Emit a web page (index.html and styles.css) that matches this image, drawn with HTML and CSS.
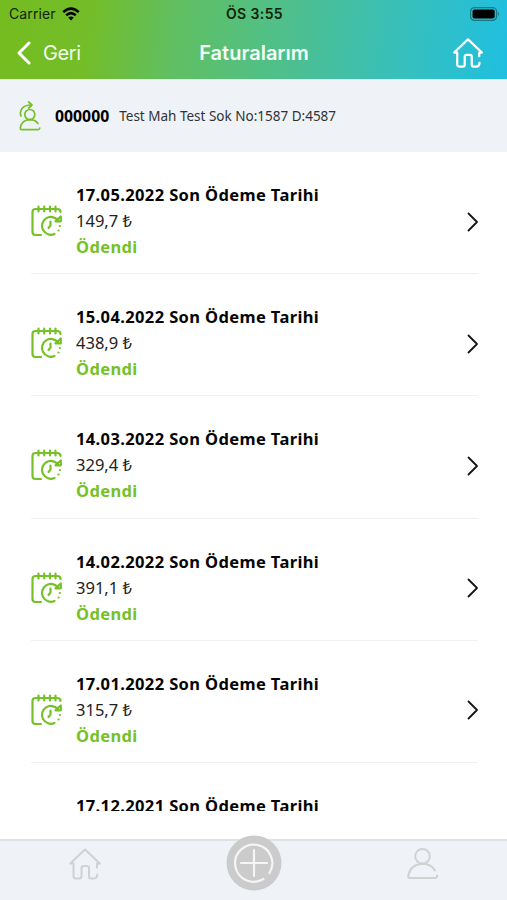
FILE: index.html
```html
<!DOCTYPE html>
<html lang="tr">
<head>
<meta charset="utf-8">
<title>Faturalarım</title>
<link rel="stylesheet" href="styles.css">
</head>
<body>
<svg class="defs" aria-hidden="true">
  <symbol id="home" viewBox="0 0 32 32">
    <path d="M4.500 15.500H1.200L16 1.500 30.800 15.500H28V19.500M4.500 15.500V28Q4.500 30.500 7 30.500H10.500Q12.500 30.500 12.500 28.500V20Q12.500 18 14.500 18H18Q20 18 20 20V28.500Q20 30.500 22 30.500H25Q28 30.500 28.300 26.500"/>
  </symbol>
  <symbol id="invoice" viewBox="0 0 32 32">
    <path d="M10 30H4.500Q1.500 30 1.500 27V7Q1.500 4 4.500 4H26Q29.500 4 29.500 7M7.500 1.500V6.500M13.200 1.500V6.500M19 1.500V6.500M24.500 1.500V6.500"/>
    <path d="M23.500 29A8.900 8.900 0 1 1 27 15.500M29.800 11.500V16.300H24.500ZM19.500 16.500V20.500L17.500 23"/>
    <path class="dots" d="M28.800 21h.1M27.500 25.500h.1"/>
  </symbol>
  <symbol id="next" viewBox="0 0 12 20"><path d="M1.500 1.500 10 10 1.500 18.500"/></symbol>
</svg>
<header class="header">
  <div class="status">
    <div class="carrier"><span>Carrier</span>
      <svg class="wifi" viewBox="0 0 18 14"><path d="M1.200 5.200Q9-2 16.800 5.200M4.200 8.300Q9 4 13.800 8.300"/><path class="solid" d="M6.200 10.600Q9 8.300 11.800 10.600L9 13.600Z"/></svg>
    </div>
    <div class="time">ÖS 3:55</div>
    <svg class="battery" viewBox="0 0 30 14"><rect class="shell" x=".6" y=".6" width="26" height="12.800" rx="4"/><rect x="2.500" y="2.500" width="22.200" height="9" rx="2"/><path class="tip" d="M28 5Q30 7 28 9Z"/></svg>
  </div>
  <nav class="navbar">
    <div class="back"><svg viewBox="0 0 14 24"><path d="M12 2 2 12 12 22"/></svg><span>Geri</span></div>
    <h1>Faturalarım</h1>
    <svg class="home"><use href="#home"/></svg>
  </nav>
</header>
<section class="account">
  <svg viewBox="0 0 22 30"><circle cx="10.800" cy="13.500" r="5"/><path d="M19 22.500Q16 18.700 10.800 18.700Q2.500 19 1.300 27Q1.300 28.700 3 28.700H19Q20.600 28.700 20.800 27M2 15C0 9.500 3.500 4 12 4M9.700 1 13 4 9.700 7"/></svg>
  <strong>000000</strong><span>Test Mah Test Sok No:1587 D:4587</span>
</section>
<main class="list">
  <article class="row"><svg class="invoice"><use href="#invoice"/></svg><div class="info"><h2>17.05.2022 Son Ödeme Tarihi</h2><p>149,7 ₺</p><p class="paid">Ödendi</p></div><svg class="next"><use href="#next"/></svg></article>
  <article class="row"><svg class="invoice"><use href="#invoice"/></svg><div class="info"><h2>15.04.2022 Son Ödeme Tarihi</h2><p>438,9 ₺</p><p class="paid">Ödendi</p></div><svg class="next"><use href="#next"/></svg></article>
  <article class="row"><svg class="invoice"><use href="#invoice"/></svg><div class="info"><h2>14.03.2022 Son Ödeme Tarihi</h2><p>329,4 ₺</p><p class="paid">Ödendi</p></div><svg class="next"><use href="#next"/></svg></article>
  <article class="row"><svg class="invoice"><use href="#invoice"/></svg><div class="info"><h2>14.02.2022 Son Ödeme Tarihi</h2><p>391,1 ₺</p><p class="paid">Ödendi</p></div><svg class="next"><use href="#next"/></svg></article>
  <article class="row"><svg class="invoice"><use href="#invoice"/></svg><div class="info"><h2>17.01.2022 Son Ödeme Tarihi</h2><p>315,7 ₺</p><p class="paid">Ödendi</p></div><svg class="next"><use href="#next"/></svg></article>
  <article class="row last"><div class="info"><h2>17.12.2021 Son Ödeme Tarihi</h2></div></article>
</main>
<footer class="tabs">
  <svg class="home"><use href="#home"/></svg>
  <svg class="add" viewBox="0 0 56 56"><circle class="disc" cx="28" cy="28" r="27.500"/><path d="M37.500 44A18.600 18.600 0 1 1 43.500 38M28 15V41M15 28H41"/></svg>
  <svg class="user" viewBox="0 0 32 32"><circle cx="15.500" cy="8.300" r="7.300"/><path d="M28 22.500Q24 15.800 15.500 15.700Q3 16.500 1.200 28Q1.200 30 3 30H28Q29.800 30 30.300 27.500"/></svg>
</footer>
</body>
</html>
```
FILE: styles.css
```css
* { box-sizing: border-box; }
body {
  margin: 0;
  width: 507px;
  height: 900px;
  display: flex;
  flex-direction: column;
  overflow: hidden;
  background: #fff;
  color: #000;
  font-family: "Noto Sans", "Open Sans", sans-serif;
}
h1, h2, p { margin: 0; }
svg {
  flex: none;
  fill: none;
  stroke: currentColor;
  stroke-width: 2;
  stroke-linecap: round;
  stroke-linejoin: round;
}
.defs { position: absolute; width: 0; height: 0; }
.header {
  flex: none;
  height: 79px;
  background: linear-gradient(97deg, #75bc20 0%, #73bd29 18%, #60bf63 35%, #4dbf90 58%, #36bfbe 80%, #1fbfe2 100%);
  font-family: Inter, sans-serif;
}
.status {
  height: 27px;
  display: grid;
  grid-template-columns: 1fr auto 1fr;
  align-items: center;
  padding: 0 7px 0 9px;
  font-size: 14px;
  color: #122309;
}
.carrier { display: flex; align-items: center; gap: 6px; letter-spacing: .1px; }
.wifi { width: 18px; height: 14px; color: #000; stroke-width: 2.500; stroke-linecap: butt; }
.wifi .solid { fill: #000; stroke: none; }
.time { font-weight: 600; letter-spacing: .4px; }
.battery { width: 30px; height: 14px; justify-self: end; fill: #000; stroke: none; }
.battery .shell { fill: none; stroke: #187780; stroke-width: 1.200; }
.battery .tip { fill: #187780; }
.navbar {
  height: 52px;
  display: grid;
  grid-template-columns: 1fr auto 1fr;
  align-items: center;
  padding: 0 24px 1px 17px;
  color: #fff;
}
.back { display: flex; align-items: center; gap: 12px; font-size: 20px; letter-spacing: -.4px; color: #f2ffe9; }
.back svg { width: 14px; height: 24px; stroke-width: 3; color: #fff; }
h1 { margin-left: 8px; font-size: 20px; font-weight: 600; line-height: 28px; color: #f2fff5; }
.home { width: 30px; height: 30px; }
.navbar .home { justify-self: end; stroke-width: 2.400; }
.account {
  flex: none;
  height: 73px;
  display: flex;
  align-items: center;
  background: #eff3f8;
  border-top: 1px solid #dff5e4;
  padding: 0 19px;
}
.account svg { width: 22px; height: 30px; color: #76c126; stroke-width: 1.700; }
.account strong { margin-left: 14px; font-size: 15.800px; }
.account span { margin-left: 10px; font-size: 13.500px; color: #303236; }
.list { flex: none; height: 659px; overflow: hidden; padding: 0 29px 0 31px; }
.row {
  height: 122.200px;
  display: flex;
  align-items: center;
  padding-top: 17px;
  border-bottom: 1px solid #f0f0f0;
}
.invoice { width: 32px; height: 32px; color: #76c126; stroke-width: 2.200; }
.invoice + .info { margin-left: 13px; }
.info { flex: 1; font-size: 16.500px; line-height: 26px; color: #222; }
h2 { font-size: 16.500px; letter-spacing: .37px; line-height: 26px; color: #050505; }
.paid { color: #76c126; font-size: 16.500px; letter-spacing: .35px; font-weight: 700; }
.next { width: 12px; height: 20px; margin: 1px -1px 0 0; color: #151515; stroke-width: 1.800; }
.last { align-items: flex-start; padding: 30px 0 0 45px; border: 0; }
.tabs {
  position: relative;
  flex: none;
  height: 61px;
  margin-top: auto;
  display: flex;
  justify-content: space-between;
  padding: 7px 68px 0 69px;
  background: #eff3f8;
  border-top: 2px solid #dfe2e5;
  color: #cfd1d3;
}
.tabs .home, .user { width: 32px; height: 32px; }
.add { width: 56px; height: 56px; margin-top: -13px; color: #f5f5f5; stroke-width: 2.200; }
.add .disc { fill: #cbcbcb; stroke: none; }
```
